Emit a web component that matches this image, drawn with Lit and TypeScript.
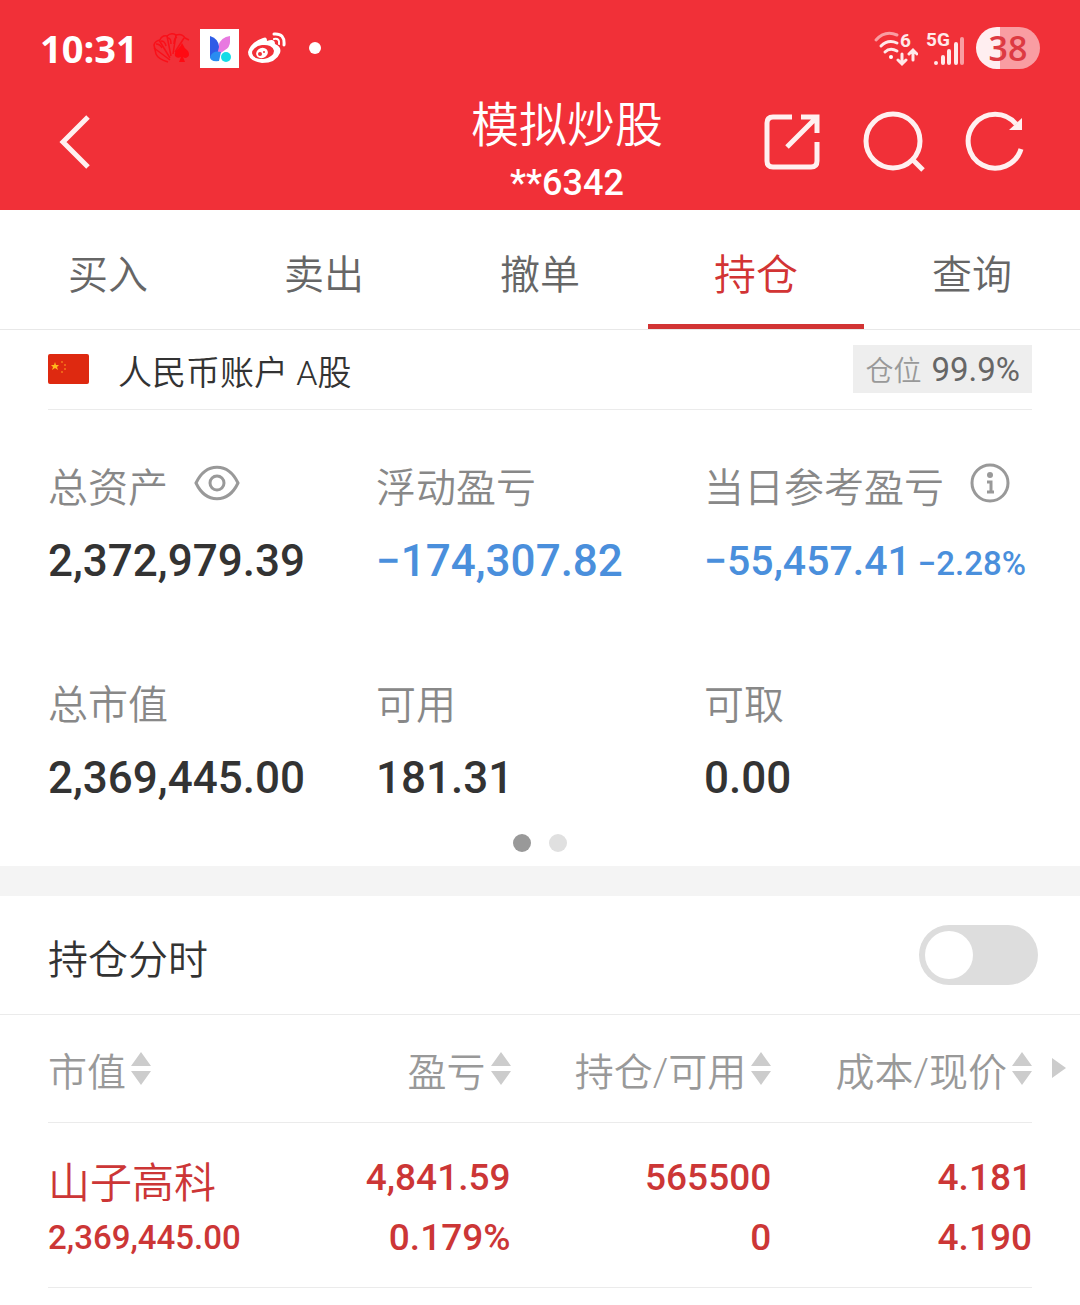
import { LitElement, html, css, svg, nothing } from "lit";
import { customElement, property, state } from "lit/decorators.js";
import { classMap } from "lit/directives/class-map.js";

const FONT = css`Roboto, "Noto Sans CJK SC", sans-serif`;

const reset = css`
  * {
    box-sizing: border-box;
    margin: 0;
    padding: 0;
  }
  button {
    border: 0;
    background: none;
    font: inherit;
    color: inherit;
    cursor: pointer;
  }
  svg {
    display: block;
  }
`;

@customElement("status-bar")
class StatusBar extends LitElement {
  static styles = [
    reset,
    css`
      :host {
        display: flex;
        justify-content: space-between;
        align-items: center;
        height: 96px;
        padding: 0 40px;
        color: #fff;
      }
      .group {
        display: flex;
        align-items: center;
      }
      .left {
        gap: 9px;
      }
      .right {
        gap: 8px;
      }
      .time {
        font: 700 38px/48px "Open Sans", "Noto Sans", sans-serif;
        margin-right: 6px;
      }
      .dot {
        width: 12px;
        height: 12px;
        margin-left: 14px;
        border-radius: 50%;
        background: #fff;
      }
      .battery {
        width: 64px;
        height: 42px;
        border-radius: 21px;
        background: linear-gradient(90deg, #ffeef0 38%, #f99da2 38%);
        color: #dd3a42;
        font: 600 34px/42px "Open Sans", "Noto Sans", sans-serif;
        text-align: center;
      }
      .small {
        font: 700 19px "Roboto", sans-serif;
        fill: #ffe9ea;
      }
    `,
  ];

  render() {
    return html`
      <div class="group left">
        <time class="time">10:31</time>
        <svg width="38" height="32" viewBox="0 0 38 32" aria-hidden="true">
          <g fill="none" stroke="#f91019" stroke-width="1.5" stroke-linejoin="round">
            <path d="M3 22 L1 13 Q2 9 7 8 Q9 3 14 4 Q18 0 23 3 Q29 1 32 6 L36 8" />
            <path d="M3 22 Q5 27 15 30 M1 16 L17 28 M6 8 L17 26 M14 4 L18 24 M23 3 L20 22 M31 6 L22 20" />
            <path d="M3 12 Q7 12 9 16 M8 9 Q12 9 13 14 M15 6 Q18 6 18 12 M24 5 Q21 6 21 12" />
          </g>
          <path fill="#ff0a12" d="M29 11 Q31 16 35 19 Q38 24 33 26 Q31 26 30 25 L32 30 H26 L28 25 Q24 27 22 24 Q21 20 25 17 Q28 14 29 11Z" />
        </svg>
        <svg width="39" height="39" viewBox="0 0 39 39" aria-hidden="true">
          <rect width="39" height="39" fill="#fff" />
          <path fill="#e879e0" d="M30 7 V13 Q30 18 25 21 L15 28 L18 17 Q21 8 30 7Z" />
          <path fill="#2e5ce6" d="M10 7 Q19 10 19 18 L17 26 L10 29Z" />
          <path fill="#2a8cf0" d="M10 28 Q13 21 21 23 L19 32 Q10 33 10 28Z" />
          <circle cx="26" cy="28" r="5" fill="#16dbe6" />
        </svg>
        <svg width="38" height="32" viewBox="0 0 38 32" aria-hidden="true">
          <path fill="#fff" d="M15 6 Q19 4 19 9 Q27 6 27 12 Q34 15 32 21 Q28 31 14 31 Q0 29 0 20 Q3 10 15 6Z" />
          <ellipse cx="15" cy="20" rx="11" ry="7" fill="#f13038" transform="rotate(-8 15 20)" />
          <ellipse cx="14" cy="21" rx="6" ry="5" fill="#fff" transform="rotate(-20 14 21)" />
          <circle cx="12" cy="22" r="2" fill="#f13038" />
          <circle cx="16" cy="20" r="1" fill="#f13038" />
          <g fill="none" stroke="#fff" stroke-width="3" stroke-linecap="round">
            <path d="M26 2 Q37 1 36 13" />
            <path d="M26 7 Q32 6 31 12" stroke-width="2" />
          </g>
        </svg>
        <span class="dot"></span>
      </div>
      <div class="group right">
        <svg width="46" height="44" viewBox="0 -4 46 44" role="img" aria-label="Wi-Fi 6">
          <g fill="none" stroke="#ffe9ea" stroke-width="3" stroke-linecap="round">
            <path d="M4 10 Q13 0 25 5" stroke="#f99da2" />
            <path d="M9 16 Q16 9 25 13" />
            <path d="M13 22 Q18 17 25 21" />
            <path d="M30 24 V33 M26 30 L30 34 L34 30 M41 30 V21 M37 24 L41 20 L45 24" />
          </g>
          <circle cx="19" cy="27" r="2" fill="#fff" />
          <text class="small" x="28" y="17">6</text>
        </svg>
        <svg width="42" height="44" viewBox="0 -4 42 44" role="img" aria-label="5G">
          <text class="small" x="0" y="16">5G</text>
          <g stroke="#ffe9ea" stroke-width="4" stroke-linecap="round">
            <path d="M10 33 V33 M17 33 V27 M23 33 V21 M30 33 V14" />
            <path d="M36 33 V9" stroke="#f99da2" />
          </g>
        </svg>
        <span class="battery">38</span>
      </div>
    `;
  }
}

@customElement("nav-header")
class NavHeader extends LitElement {
  static styles = [
    reset,
    css`
      :host {
        display: grid;
        grid-template-columns: 1fr auto 1fr;
        align-items: start;
        height: 114px;
        padding-left: 54px;
        color: #fff;
        font-family: ${FONT};
      }
      .icon {
        display: grid;
        place-items: center;
        height: 92px;
      }
      .back {
        justify-self: start;
      }
      .actions {
        display: flex;
        justify-content: flex-end;
        gap: 38px;
        padding-right: 52px;
      }
      .title {
        text-align: center;
      }
      h1 {
        font-weight: 350;
        font-size: 48px;
        line-height: 60px;
      }
      p {
        margin-top: 4px;
        font-weight: 500;
        font-size: 36px;
        line-height: 46px;
      }
      .line {
        fill: none;
        stroke: #fff0f0;
        stroke-width: 5;
      }
    `,
  ];

  render() {
    return html`
      <button class="icon back" aria-label="返回">
        <svg width="42" height="64" viewBox="0 0 42 64">
          <path class="line" d="M34 7 L9 32 L34 57" />
        </svg>
      </button>
      <div class="title">
        <h1>模拟炒股</h1>
        <p>**6342</p>
      </div>
      <div class="actions">
        <button class="icon" aria-label="分享">
          <svg width="64" height="64" viewBox="0 0 64 64">
            <path class="line" d="M32 7 H13 Q7 7 7 13 V51 Q7 57 13 57 H51 Q57 57 57 51 V32" />
            <path class="line" d="M41 7 H57 V23 M57 7 L27 37" />
          </svg>
        </button>
        <button class="icon" aria-label="搜索">
          <svg width="64" height="64" viewBox="0 0 64 64">
            <circle class="line" cx="31" cy="31" r="27" />
            <path class="line" d="M50 49 L61 60" />
          </svg>
        </button>
        <button class="icon" aria-label="刷新">
          <svg width="64" height="64" viewBox="0 0 64 64">
            <path class="line" d="M57 39 A27 27 0 1 1 52 14" />
            <path d="M58 8 V20 H45Z" fill="#fff0f0" />
          </svg>
        </button>
      </div>
    `;
  }
}

@customElement("trade-tabs")
class TradeTabs extends LitElement {
  @state() private active = "持仓";

  static styles = [
    reset,
    css`
      :host {
        display: block;
        border-bottom: 1px solid #e8e8e8;
        font-family: ${FONT};
      }
      nav {
        display: grid;
        grid-template-columns: repeat(5, 1fr);
      }
      .tab {
        height: 119px;
        padding-top: 9px;
        border-bottom: 5px solid transparent;
        color: #666;
        font-weight: 350;
        font-size: 40px;
      }
      .active {
        border-color: #d23434;
        color: #d23434;
        font-size: 42px;
      }
    `,
  ];

  render() {
    return html`<nav>
      ${["买入", "卖出", "撤单", "持仓", "查询"].map(
        (name) => html`<button
          class=${classMap({ tab: true, active: name === this.active })}
          aria-current=${name === this.active ? "page" : nothing}
          @click=${() => (this.active = name)}
        >${name}</button>`
      )}
    </nav>`;
  }
}

interface Stat {
  label: string;
  value: string;
  tone?: "loss";
  rate?: string;
  icon?: "eye" | "info";
}

const STATS: Stat[] = [
  { label: "总资产", value: "2,372,979.39", icon: "eye" },
  { label: "浮动盈亏", value: "−174,307.82", tone: "loss" },
  { label: "当日参考盈亏", value: "−55,457.41", tone: "loss", rate: "−2.28%", icon: "info" },
  { label: "总市值", value: "2,369,445.00" },
  { label: "可用", value: "181.31" },
  { label: "可取", value: "0.00" },
];

@customElement("account-summary")
class AccountSummary extends LitElement {
  static styles = [
    reset,
    css`
      :host {
        display: block;
        font-family: ${FONT};
      }
      .account {
        display: flex;
        align-items: center;
        height: 80px;
        margin: 0 48px;
        padding-bottom: 1px;
        border-bottom: 1px solid #ebebeb;
      }
      h2 {
        margin-left: 29px;
        padding-top: 8px;
        color: #333;
        font-weight: 350;
        font-size: 34px;
        line-height: 48px;
      }
      .position {
        display: flex;
        align-items: center;
        gap: 10px;
        height: 48px;
        margin-left: auto;
        padding: 0 12px;
        background: #eee;
        color: #999;
        font-weight: 350;
        font-size: 28px;
      }
      .position b {
        color: #666;
        font-weight: 400;
        font-size: 33px;
      }
      .stats {
        display: grid;
        grid-template-columns: repeat(3, 1fr);
        row-gap: 88px;
        padding: 51px 48px 0;
      }
      .stat {
        min-width: 0;
      }
      dt {
        display: flex;
        align-items: center;
        gap: 26px;
        height: 56px;
        color: #888;
        font-weight: 350;
        font-size: 40px;
        line-height: 56px;
        white-space: nowrap;
      }
      dt button {
        margin-bottom: 12px;
      }
      dd {
        display: flex;
        align-items: baseline;
        gap: 7px;
        margin-top: 18px;
        color: #333;
        font-weight: 500;
        font-size: 44px;
        line-height: 52px;
        white-space: nowrap;
      }
      .loss {
        color: #4a8fdc;
      }
      .rated {
        font-size: 41px;
      }
      .rate {
        font-size: 33px;
      }
      .pager {
        display: flex;
        justify-content: center;
        gap: 18px;
        padding: 30px 0 14px;
      }
      .dot {
        width: 18px;
        height: 18px;
        border-radius: 50%;
        background: #e0e0e0;
      }
      .current {
        background: #999;
      }
      .outline {
        fill: none;
        stroke: #999;
        stroke-width: 3;
      }
    `,
  ];

  private icon(kind: Stat["icon"]) {
    if (kind === "eye") {
      return html`<button aria-label="隐藏资产">
        <svg width="46" height="36" viewBox="0 0 46 36">
          <path class="outline" d="M2 18 C12 -3 34 -3 44 18 C34 39 12 39 2 18Z" />
          <circle class="outline" cx="23" cy="18" r="7" />
        </svg>
      </button>`;
    }
    if (kind === "info") {
      return html`<button aria-label="说明">
        <svg width="40" height="40" viewBox="0 0 40 40">
          <circle class="outline" cx="20" cy="20" r="18" />
          <circle cx="20" cy="12" r="3" fill="#999" />
          <path class="outline" d="M17 19 H21 V29 M17 29 H24" />
        </svg>
      </button>`;
    }
    return nothing;
  }

  render() {
    return html`
      <div class="account">
        <svg width="41" height="30" viewBox="0 0 41 30" role="img" aria-label="中国">
          <rect width="41" height="30" rx="2" fill="#de2910" />
          <path fill="#ffb81c" d="M7 8 L8 11 L11 11 L9 13 L10 16 L7 14 L4 16 L5 13 L3 11 L6 11Z" />
          <g fill="#f5761a">
            <circle cx="14" cy="8" r="1" />
            <circle cx="17" cy="11" r="1" />
            <circle cx="17" cy="15" r="1" />
            <circle cx="14" cy="18" r="1" />
          </g>
        </svg>
        <h2>人民币账户 A股</h2>
        <div class="position">仓位 <b>99.9%</b></div>
      </div>
      <dl class="stats">
        ${STATS.map(
          (s) => html`<div class="stat">
            <dt>${s.label}${this.icon(s.icon)}</dt>
            <dd class=${classMap({ loss: s.tone === "loss", rated: !!s.rate })}>
              ${s.value}${s.rate ? html`<span class="rate">${s.rate}</span>` : nothing}
            </dd>
          </div>`
        )}
      </dl>
      <div class="pager"><span class="dot current"></span><span class="dot"></span></div>
    `;
  }
}

@customElement("intraday-switch")
class IntradaySwitch extends LitElement {
  static styles = [
    reset,
    css`
      :host {
        display: block;
        border-top: 30px solid #f4f4f4;
        border-bottom: 1px solid #ebebeb;
        font-family: ${FONT};
      }
      label {
        display: flex;
        align-items: center;
        justify-content: space-between;
        height: 118px;
        padding: 0 42px 0 48px;
        color: #333;
        font-weight: 350;
        font-size: 40px;
      }
      .text {
        padding-top: 4px;
      }
      input {
        appearance: none;
        display: flex;
        width: 119px;
        height: 60px;
        padding: 6px;
        border-radius: 30px;
        background: #ddd;
        cursor: pointer;
      }
      input::before {
        content: "";
        width: 48px;
        height: 48px;
        border-radius: 50%;
        background: #fff;
      }
      input:checked {
        justify-content: flex-end;
        background: #d23434;
      }
    `,
  ];

  render() {
    return html`<label><span class="text">持仓分时</span><input type="checkbox" role="switch" /></label>`;
  }
}

interface Holding {
  name: string;
  marketValue: string;
  pairs: [string, string][];
}

const HOLDINGS: Holding[] = [
  {
    name: "山子高科",
    marketValue: "2,369,445.00",
    pairs: [
      ["4,841.59", "0.179%"],
      ["565500", "0"],
      ["4.181", "4.190"],
    ],
  },
];

const sortIcon = svg`
  <path d="M0 14 L10 0 L20 14Z M0 19 L10 33 L20 19Z" fill="#ccc" />
`;

@customElement("holdings-table")
class HoldingsTable extends LitElement {
  @property({ attribute: false }) rows = HOLDINGS;

  static styles = [
    reset,
    css`
      :host {
        display: block;
        position: relative;
        padding: 0 48px;
        font-family: ${FONT};
      }
      table {
        width: 100%;
        table-layout: fixed;
        border-collapse: separate;
        border-spacing: 0;
      }
      .wide {
        width: 26.5%;
      }
      th,
      td {
        border-bottom: 1px solid #ebebeb;
        text-align: right;
        white-space: nowrap;
      }
      th:first-child,
      td:first-child {
        text-align: left;
      }
      th {
        height: 108px;
        color: #999;
        font-weight: 350;
        font-size: 39px;
      }
      .sort {
        display: inline-flex;
        align-items: center;
        gap: 5px;
        line-height: 56px;
      }
      .label {
        padding-top: 8px;
      }
      td {
        height: 165px;
        padding-top: 25px;
        color: #cc3636;
        font-weight: 500;
        font-size: 37px;
        line-height: 60px;
        vertical-align: top;
      }
      td span {
        display: block;
      }
      .name {
        font-weight: 350;
        font-size: 42px;
        line-height: 72px;
      }
      .value {
        font-size: 33px;
        line-height: 36px;
      }
      .more {
        position: absolute;
        top: 43px;
        right: 14px;
      }
    `,
  ];

  render() {
    return html`
      <table>
        <colgroup><col /><col /><col class="wide" /><col class="wide" /></colgroup>
        <thead>
          <tr>
            ${["市值", "盈亏", "持仓/可用", "成本/现价"].map(
              (h) => html`<th scope="col">
                <button class="sort">
                  <span class="label">${h}</span>
                  <svg width="20" height="33" viewBox="0 0 20 33" aria-hidden="true">${sortIcon}</svg>
                </button>
              </th>`
            )}
          </tr>
        </thead>
        <tbody>
          ${this.rows.map(
            (r) => html`<tr>
              <td><span class="name">${r.name}</span><span class="value">${r.marketValue}</span></td>
              ${r.pairs.map(([a, b]) => html`<td><span>${a}</span><span>${b}</span></td>`)}
            </tr>`
          )}
        </tbody>
      </table>
      <button class="more" aria-label="更多列">
        <svg width="14" height="20" viewBox="0 0 14 20"><path d="M0 0 L14 10 L0 20Z" fill="#ccc" /></svg>
      </button>
    `;
  }
}

@customElement("app-root")
class AppRoot extends LitElement {
  static styles = css`
    :host {
      display: block;
      min-height: 100vh;
      background: #fff;
    }
    .top {
      background: #f13038;
    }
  `;

  render() {
    return html`
      <header class="top">
        <status-bar></status-bar>
        <nav-header></nav-header>
      </header>
      <trade-tabs></trade-tabs>
      <main>
        <account-summary></account-summary>
        <intraday-switch></intraday-switch>
        <holdings-table></holdings-table>
      </main>
    `;
  }
}
